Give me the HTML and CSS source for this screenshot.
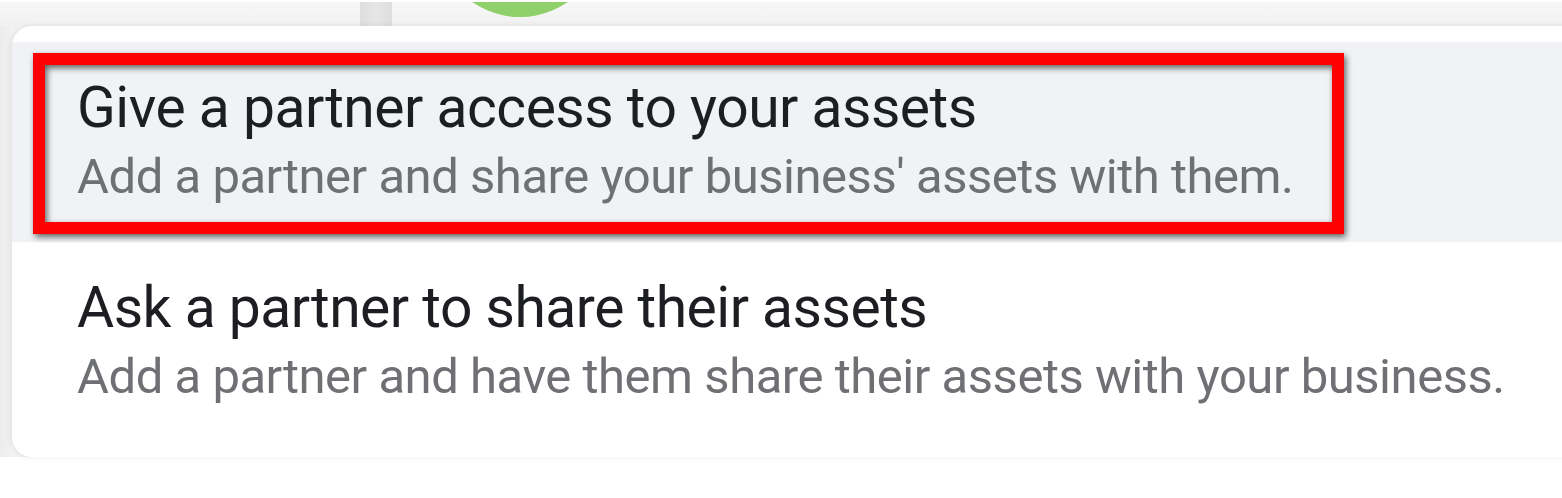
FILE: index.html
```html
<!DOCTYPE html>
<html lang="en">
<head>
<meta charset="utf-8">
<title>Partner options</title>
<link rel="stylesheet" href="styles.css">
</head>
<body>
<div class="stage">
  <div class="topbar">
    <div class="topbar-handle"></div>
    <div class="topbar-avatar"></div>
  </div>
  <div class="card">
    <div class="option option-active">
      <div class="option-title">Give a partner access to your assets</div>
      <div class="option-desc">Add a partner and share your business' assets with them.</div>
    </div>
    <div class="option">
      <div class="option-title">Ask a partner to share their assets</div>
      <div class="option-desc">Add a partner and have them share their assets with your business.</div>
    </div>
  </div>
</div>
</body>
</html>
```

FILE: styles.css
```css
html, body {
  margin: 0;
  padding: 0;
  background: #ffffff;
  overflow: hidden;
}

body {
  width: 1562px;
  height: 498px;
  font-family: Roboto, "Liberation Sans", sans-serif;
}

.stage {
  height: 457px;
  background: linear-gradient(90deg, #ececec 0, #f3f3f3 12px, #f4f4f4 100%);
  border-top: 2px solid #ffffff;
  box-sizing: border-box;
  display: flex;
  flex-direction: column;
}

.topbar {
  height: 24px;
  flex: 0 0 24px;
  display: flex;
  align-items: flex-start;
  overflow: hidden;
  padding-left: 360px;
  gap: 44px;
  background: linear-gradient(180deg, #f7f7f7 0, #f1f1f1 100%);
}

.topbar-handle {
  width: 32px;
  height: 24px;
  flex: 0 0 32px;
  background: linear-gradient(90deg, #dedede 0, #e6e6e6 50%, #dedede 100%);
}

.topbar-avatar {
  width: 168px;
  height: 168px;
  flex: 0 0 168px;
  margin-top: -153px;
  border-radius: 50%;
  background: #8fd06b;
}

.card {
  margin-left: 12px;
  width: 1600px;
  height: 431px;
  box-sizing: border-box;
  background: #ffffff;
  border-radius: 20px 0 0 20px;
  box-shadow: -2px 0 6px rgba(0, 0, 0, 0.07);
  padding: 16px 0 15px;
  display: flex;
  flex-direction: column;
}

.option {
  position: relative;
  height: 200px;
  flex: 0 0 200px;
  box-sizing: border-box;
  padding: 31px 0 0 65px;
}

.option-active {
  background: #f0f2f5;
}

.option-active::after {
  content: "";
  position: absolute;
  left: 21px;
  top: 11px;
  width: 1311px;
  height: 181px;
  box-sizing: border-box;
  border: 12px solid #ff0000;
  filter: drop-shadow(2px 3px 3px rgba(0, 0, 0, 0.6));
}

.option-title {
  font-size: 57px;
  line-height: 70px;
  letter-spacing: -0.5px;
  color: #1c1e21;
  white-space: nowrap;
}

.option-desc {
  margin-top: 2px;
  font-size: 49px;
  line-height: 64px;
  letter-spacing: -0.47px;
  color: #6f7073;
  white-space: nowrap;
}
```
